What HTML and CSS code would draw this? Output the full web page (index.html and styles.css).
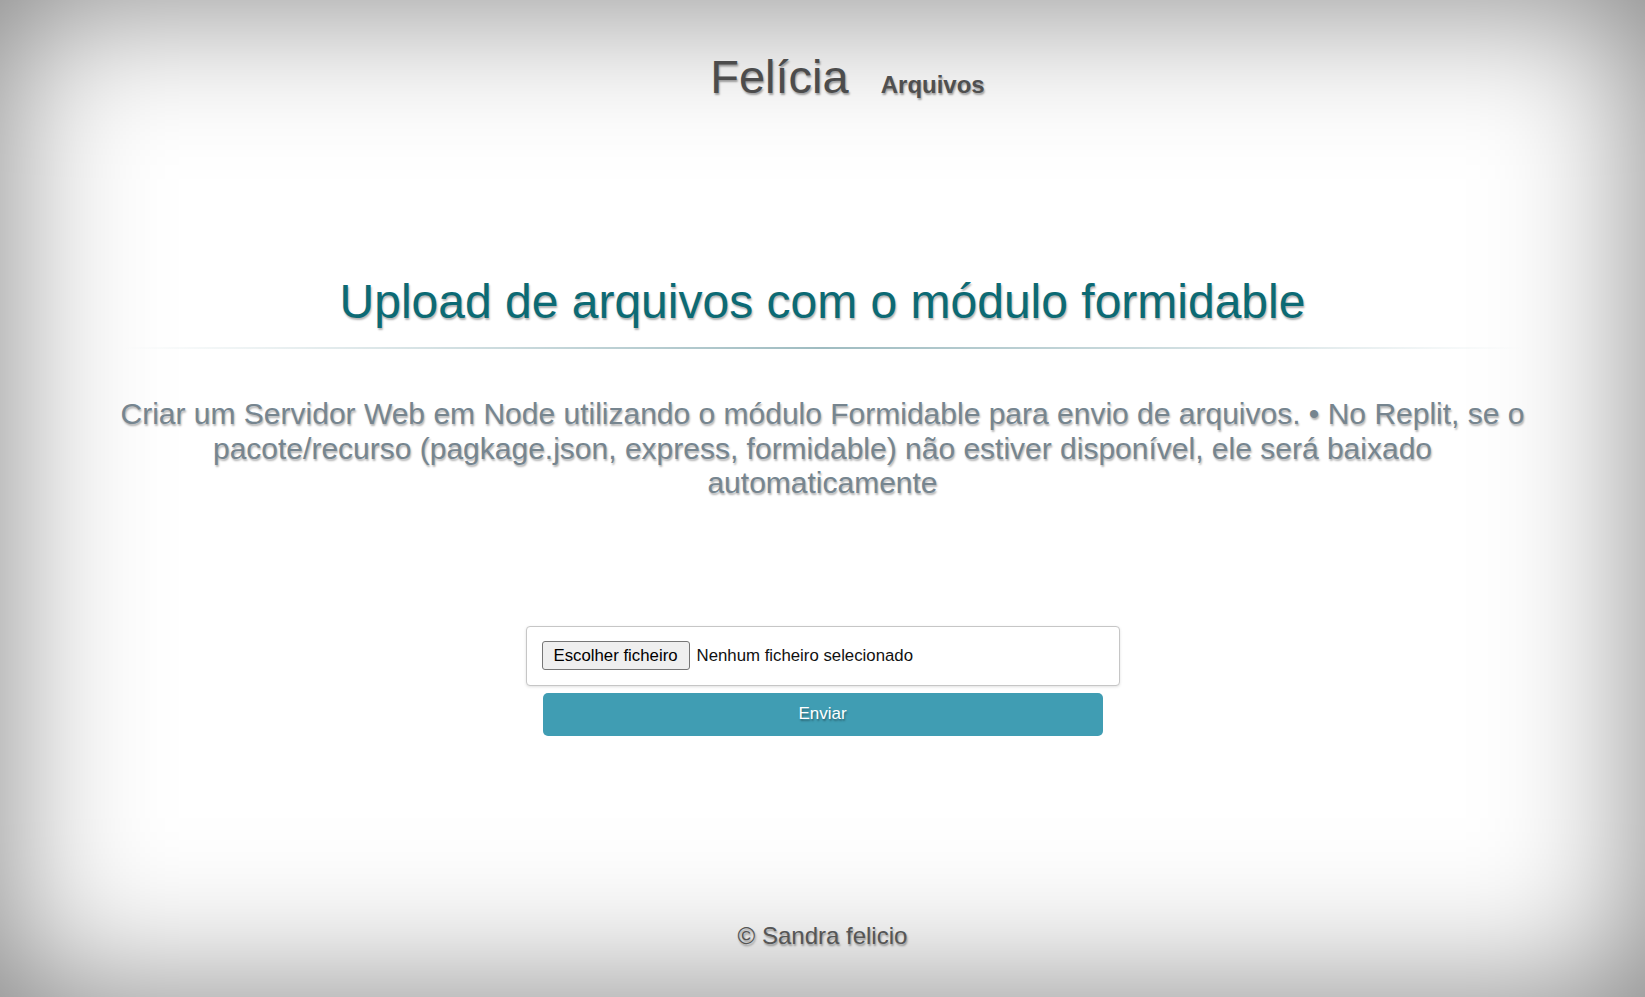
FILE: index.html
```html
<!DOCTYPE html>
<html lang="pt">
<head>
<meta charset="utf-8">
<title>Felícia - Arquivos</title>
<link rel="stylesheet" href="styles.css">
</head>
<body>
<div class="page">
  <header class="site-header">
    <span class="brand">Felícia</span>
    <span class="section">Arquivos</span>
  </header>
  <main class="content">
    <h1 class="title">Upload de arquivos com o módulo formidable</h1>
    <div class="rule"></div>
    <p class="lead">Criar um Servidor Web em Node utilizando o módulo Formidable para envio de arquivos. • No Replit, se o pacote/recurso (pagkage.json, express, formidable) não estiver disponível, ele será baixado automaticamente</p>
    <form class="upload">
      <div class="file-box">
        <label class="file-btn">Escolher ficheiro</label>
        <span class="file-name">Nenhum ficheiro selecionado</span>
      </div>
      <button type="button" class="send">Enviar</button>
    </form>
  </main>
  <footer class="site-footer">© Sandra felicio</footer>
</div>
</body>
</html>
```

FILE: styles.css
```css
html, body {
  margin: 0;
  padding: 0;
  height: 100%;
}
body {
  font-family: "Liberation Sans", Arial, sans-serif;
  background: #ffffff;
}
.page {
  height: 100vh;
  box-sizing: border-box;
  display: flex;
  flex-direction: column;
  box-shadow: inset 0 0 150px rgba(0, 0, 0, 0.5);
}
.site-header {
  display: flex;
  justify-content: center;
  align-items: baseline;
  gap: 32px;
  padding-top: 49px;
  padding-left: 50px;
}
.brand {
  font-size: 47px;
  color: #4c4c4c;
  text-shadow: 1px 2px 2px rgba(0, 0, 0, 0.35);
}
.section {
  font-size: 24px;
  font-weight: bold;
  color: #505050;
  text-shadow: 1px 2px 2px rgba(0, 0, 0, 0.35);
}
.content {
  flex: 1;
  width: 1420px;
  margin: 0 auto;
  text-align: center;
}
.title {
  margin: 170px 0 0;
  font-size: 48px;
  font-weight: normal;
  color: #0c6a74;
  text-shadow: 1px 2px 2px rgba(0, 0, 0, 0.3);
}
.rule {
  height: 2px;
  margin: 18px 10px 0;
  background: linear-gradient(to right, rgba(160, 191, 196, 0), #9fbcc1 50%, rgba(160, 191, 196, 0));
}
.lead {
  margin: 48px 0 0;
  font-size: 30px;
  line-height: 34.5px;
  color: #76858f;
  text-shadow: 1px 2px 2px rgba(0, 0, 0, 0.3);
}
.upload {
  margin: 125px auto 0;
  width: 594px;
  display: flex;
  flex-direction: column;
  align-items: center;
}
.file-box {
  box-sizing: border-box;
  width: 594px;
  height: 60px;
  padding: 15px;
  border: 1px solid #c6c6c6;
  border-radius: 4px;
  box-shadow: 0 1px 3px rgba(0, 0, 0, 0.12);
  background: #ffffff;
  display: flex;
  align-items: center;
  gap: 7px;
  font-size: 16.8px;
  color: #111111;
}
.file-btn {
  box-sizing: border-box;
  height: 29px;
  padding: 0 11px;
  display: flex;
  align-items: center;
  background: #efefef;
  border: 1px solid #767676;
  border-radius: 3px;
  color: #000000;
}
.send {
  box-sizing: border-box;
  margin-top: 7px;
  width: 560px;
  height: 43px;
  border: none;
  border-radius: 5px;
  background: #409db3;
  color: #ffffff;
  font-family: "Liberation Sans", Arial, sans-serif;
  font-size: 17px;
  text-shadow: 1px 2px 2px rgba(0, 0, 0, 0.35);
}
.site-footer {
  text-align: center;
  font-size: 24px;
  color: #555555;
  text-shadow: 1px 2px 2px rgba(0, 0, 0, 0.35);
  padding-bottom: 47px;
}
```
